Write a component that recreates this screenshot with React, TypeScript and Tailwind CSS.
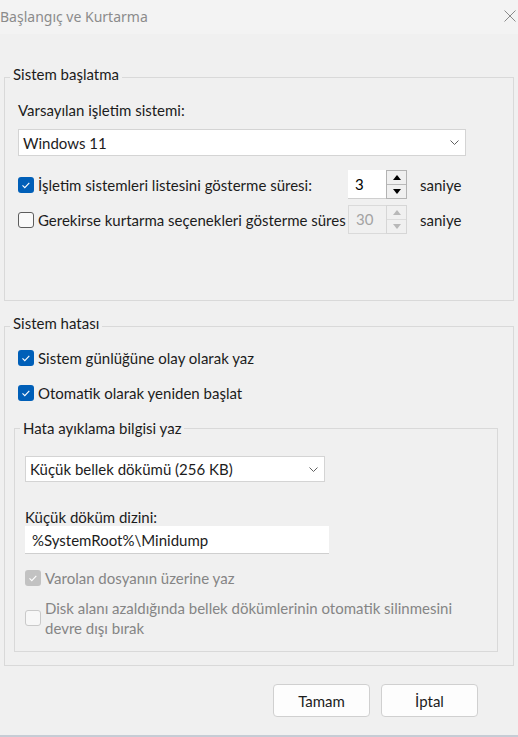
import React from "react";

function Check({ checked, disabled }: { checked?: boolean; disabled?: boolean }) {
  if (checked) {
    return (
      <div
        className={
          "w-[16px] h-[16px] rounded-[3px] flex items-center justify-center shrink-0 " +
          (disabled ? "bg-[#c2c2c2]" : "bg-[#005fb8]")
        }
      >
        <svg width="16" height="16" viewBox="0 0 16 16">
          <polyline points="4.5,8.3 6.8,10.6 11.3,5.8" fill="none" stroke="#ffffff" strokeWidth="1.1" />
        </svg>
      </div>
    );
  }
  return (
    <div
      className={
        "w-[16px] h-[16px] rounded-[3px] border shrink-0 " +
        (disabled ? "border-[#c9c9c9] bg-[#f7f7f7]" : "border-[#5d5d5d] bg-[#f9f9f9]")
      }
    />
  );
}

function Chevron() {
  return (
    <svg width="9" height="5" viewBox="0 0 9 5">
      <polyline points="0.5,0.5 4.5,4.5 8.5,0.5" fill="none" stroke="#606060" strokeWidth="1" />
    </svg>
  );
}

function Tri({ up, color }: { up?: boolean; color: string }) {
  return (
    <svg width="8" height="5" viewBox="0 0 8 5">
      {up ? <polygon points="0,5 8,5 4,0" fill={color} /> : <polygon points="0,0 8,0 4,5" fill={color} />}
    </svg>
  );
}

function Spinner({ value, disabled }: { value: string; disabled?: boolean }) {
  return (
    <div className="flex h-[29px]">
      <div
        className={
          "w-[38px] h-full pl-[7px] flex items-center leading-none " +
          (disabled
            ? "bg-[#f0f0f0] border border-r-0 border-[#dadada] text-[#a3a3a3]"
            : "bg-white border-b border-[#cfcfcf] text-black")
        }
      >
        {value}
      </div>
      <div
        className={
          "w-[21px] h-full border flex flex-col " +
          (disabled ? "border-[#d6d6d6]" : "border-[#b3b3b3]")
        }
      >
        <div
          className={
            "flex-1 flex items-center justify-center border-b " +
            (disabled ? "bg-[#f0f0f0] border-[#dcdcdc]" : "bg-[#f0f0f0] border-[#b9b9b9]")
          }
        >
          <Tri up color={disabled ? "#b8b8b8" : "#000000"} />
        </div>
        <div className="flex-1 flex items-center justify-center bg-[#f0f0f0]">
          <Tri color={disabled ? "#b8b8b8" : "#000000"} />
        </div>
      </div>
    </div>
  );
}

export default function App() {
  return (
    <div className="w-[518px] h-[737px] bg-[#f0f0f0] flex flex-col overflow-hidden text-[15px] leading-[20px] text-[#1c1c1c] font-normal font-['Lato','Noto_Sans',sans-serif]">
      {/* Title bar */}
      <div className="h-[34px] shrink-0 bg-[#f3f3f3] flex items-center justify-between pr-[2px]">
        <span className="text-[14px] text-[#8b8b8b] leading-[20px] font-['Noto_Sans',sans-serif]">Başlangıç ve Kurtarma</span>
        <svg width="12" height="12" viewBox="0 0 12 12" className="mt-[-2px]">
          <line x1="0.5" y1="0.5" x2="11.5" y2="11.5" stroke="#8a8a8a" strokeWidth="1" />
          <line x1="11.5" y1="0.5" x2="0.5" y2="11.5" stroke="#8a8a8a" strokeWidth="1" />
        </svg>
      </div>

      <div className="pl-[4px] flex flex-col">
        {/* Group 1 */}
        <fieldset className="mt-[30px] w-[510px] border border-[#d9d9d9] pl-[13px] pt-[10px] pb-[66px]">
          <legend className="ml-[-8px] px-[3px] pb-[6px] leading-[20px]">Sistem başlatma</legend>
          <div className="h-[20px] flex items-center">Varsayılan işletim sistemi:</div>
          <div className="mt-[9px] w-[448px] h-[27px] bg-white border border-[#d4d4d4] flex items-center justify-between pl-[4px] pr-[6px]">
            <span>Windows 11</span>
            <Chevron />
          </div>
          <div className="mt-[14px] flex items-center h-[29px]">
            <div className="w-[330px] flex items-center gap-[4px] whitespace-nowrap">
              <Check checked />
              <span>İşletim sistemleri listesini gösterme süresi:</span>
            </div>
            <Spinner value="3" />
            <span className="ml-[13px]">saniye</span>
          </div>
          <div className="mt-[6px] flex items-center h-[29px]">
            <div className="w-[330px] flex items-center gap-[4px] whitespace-nowrap">
              <Check />
              <span>Gerekirse kurtarma seçenekleri gösterme süres</span>
            </div>
            <Spinner value="30" disabled />
            <span className="ml-[13px]">saniye</span>
          </div>
        </fieldset>

        {/* Group 2 */}
        <fieldset className="mt-[12px] w-[510px] border border-[#d9d9d9] pl-[13px] pt-[9px] pb-[13px]">
          <legend className="ml-[-8px] px-[3px] pb-[6px] leading-[20px]">Sistem hatası</legend>
          <div className="flex items-center gap-[4px] h-[20px]">
            <Check checked />
            <span>Sistem günlüğüne olay olarak yaz</span>
          </div>
          <div className="mt-[15px] flex items-center gap-[4px] h-[20px]">
            <Check checked />
            <span>Otomatik olarak yeniden başlat</span>
          </div>

          <fieldset className="mt-[15px] ml-[-4px] w-[484px] border border-[#d9d9d9] pl-[10px] pt-[18px] pb-[13px]">
            <legend className="ml-[-5px] px-[3px] leading-[20px]">Hata ayıklama bilgisi yaz</legend>
            <div className="w-[300px] h-[26px] bg-white border border-[#d4d4d4] flex items-center justify-between pl-[4px] pr-[6px]">
              <span>Küçük bellek dökümü (256 KB)</span>
              <Chevron />
            </div>
            <div className="mt-[26px] h-[18px] leading-[18px]">Küçük döküm dizini:</div>
            <div className="w-[304px] h-[28px] bg-white border-b border-[#cfcfcf] flex items-center pl-[7px]">
              %SystemRoot%\Minidump
            </div>
            <div className="mt-[14px] flex items-center gap-[4px] h-[20px] text-[#858585]">
              <Check checked disabled />
              <span>Varolan dosyanın üzerine yaz</span>
            </div>
            <div className="mt-[10px] flex items-center gap-[4px] text-[#858585]">
              <Check disabled />
              <span>
                Disk alanı azaldığında bellek dökümlerinin otomatik silinmesini
                <br />
                devre dışı bırak
              </span>
            </div>
          </fieldset>
        </fieldset>

        <div className="mt-[18px] flex justify-end gap-[11px] pr-[40px]">
          <div className="w-[97px] h-[33px] bg-[#fdfdfd] border border-[#d0d0d0] rounded-[4px] flex items-center justify-center">
            Tamam
          </div>
          <div className="w-[97px] h-[33px] bg-[#fdfdfd] border border-[#d0d0d0] rounded-[4px] flex items-center justify-center">
            İptal
          </div>
        </div>
      </div>

      <div className="mt-auto h-[2px] bg-[#c6ccd5] shrink-0" />
    </div>
  );
}
